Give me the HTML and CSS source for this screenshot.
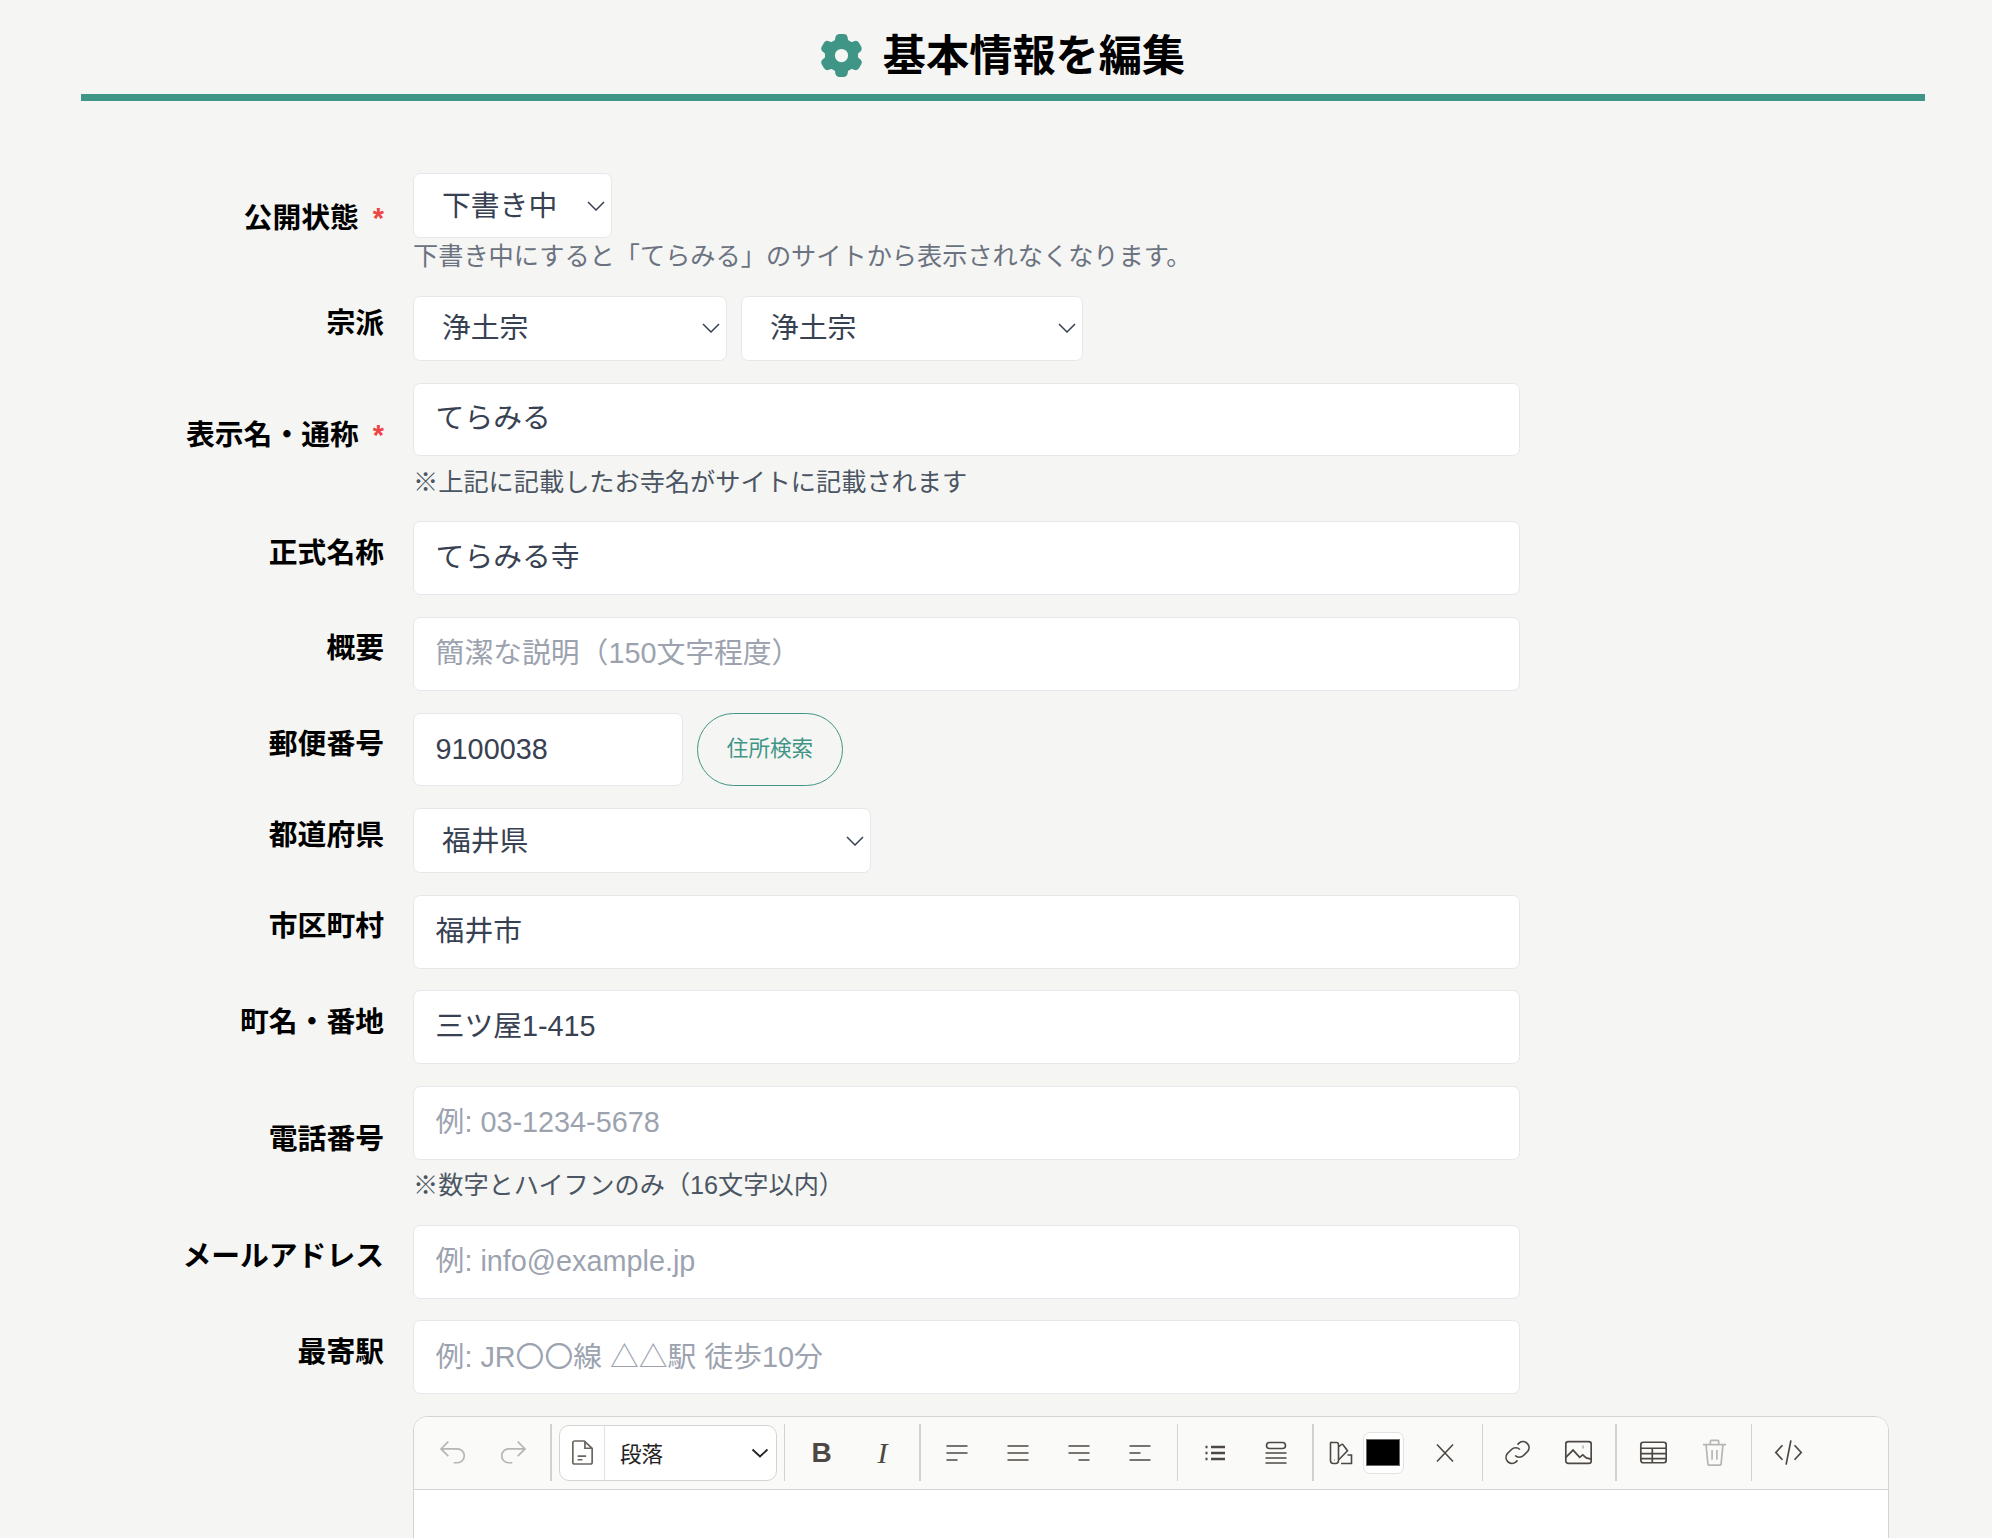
FILE: index.html
```html
<!DOCTYPE html>
<html lang="ja">
<head>
    <meta charset="UTF-8">
    <title>基本情報を編集</title>
    <link rel="stylesheet" href="styles.css">
</head>
<body>
    <div class="main">
        <h1 class="page-title">
            <svg class="title-icon" viewBox="0 0 24 24"><path fill-rule="evenodd" d="M11.078 2.25c-.917 0-1.699.663-1.85 1.567L9.05 4.889c-.02.12-.115.26-.297.348a7.493 7.493 0 0 0-.986.57c-.166.115-.334.126-.45.083L6.3 5.508a1.875 1.875 0 0 0-2.282.819l-.922 1.597a1.875 1.875 0 0 0 .432 2.385l.84.692c.095.078.17.229.154.43a7.598 7.598 0 0 0 0 1.139c.015.2-.059.352-.153.43l-.841.692a1.875 1.875 0 0 0-.432 2.385l.922 1.597a1.875 1.875 0 0 0 2.282.818l1.019-.382c.115-.043.283-.031.45.082.312.214.641.405.985.57.182.088.277.228.297.35l.178 1.071c.151.904.933 1.567 1.85 1.567h1.844c.916 0 1.699-.663 1.85-1.567l.178-1.072c.02-.12.114-.26.297-.349.344-.165.673-.356.985-.57.167-.114.335-.125.45-.082l1.02.382a1.875 1.875 0 0 0 2.28-.819l.923-1.597a1.875 1.875 0 0 0-.432-2.385l-.84-.692c-.095-.078-.17-.229-.154-.43a7.614 7.614 0 0 0 0-1.139c-.016-.2.059-.352.153-.43l.84-.692c.708-.582.891-1.59.433-2.385l-.922-1.597a1.875 1.875 0 0 0-2.282-.818l-1.02.382c-.114.043-.282.031-.449-.083a7.49 7.49 0 0 0-.985-.57c-.183-.087-.277-.227-.297-.348l-.179-1.072a1.875 1.875 0 0 0-1.85-1.567h-1.843ZM12 15a3 3 0 1 0 0-6 3 3 0 0 0 0 6Z"/></svg>
            <span class="title-text">基本情報を編集</span>
        </h1>

        <form class="edit-form">
            <div class="field">
                <label class="field-label">公開状態<span class="required">*</span></label>
                <div class="field-body">
                    <select class="select select-status"><option>下書き中</option></select>
                    <p class="note">下書き中にすると「てらみる」のサイトから表示されなくなります。</p>
                </div>
            </div>

            <div class="field">
                <label class="field-label">宗派</label>
                <div class="field-body inline-group">
                    <select class="select select-sect"><option>浄土宗</option></select>
                    <select class="select select-school"><option>浄土宗</option></select>
                </div>
            </div>

            <div class="field">
                <label class="field-label">表示名・通称<span class="required">*</span></label>
                <div class="field-body">
                    <input class="input input-jp" type="text" value="てらみる">
                    <p class="note note-dark">※上記に記載したお寺名がサイトに記載されます</p>
                </div>
            </div>

            <div class="field">
                <label class="field-label">正式名称</label>
                <div class="field-body"><input class="input input-jp" type="text" value="てらみる寺"></div>
            </div>

            <div class="field">
                <label class="field-label">概要</label>
                <div class="field-body"><input class="input" type="text" placeholder="簡潔な説明（150文字程度）"></div>
            </div>

            <div class="field">
                <label class="field-label">郵便番号</label>
                <div class="field-body inline-group">
                    <input class="input input-zip" type="text" value="9100038">
                    <button class="address-button" type="button">住所検索</button>
                </div>
            </div>

            <div class="field">
                <label class="field-label">都道府県</label>
                <div class="field-body"><select class="select select-pref"><option>福井県</option></select></div>
            </div>

            <div class="field">
                <label class="field-label">市区町村</label>
                <div class="field-body"><input class="input input-jp" type="text" value="福井市"></div>
            </div>

            <div class="field">
                <label class="field-label">町名・番地</label>
                <div class="field-body"><input class="input input-jp" type="text" value="三ツ屋1-415"></div>
            </div>

            <div class="field">
                <label class="field-label">電話番号</label>
                <div class="field-body">
                    <input class="input" type="text" placeholder="例: 03-1234-5678">
                    <p class="note note-dark">※数字とハイフンのみ（16文字以内）</p>
                </div>
            </div>

            <div class="field">
                <label class="field-label">メールアドレス</label>
                <div class="field-body"><input class="input" type="text" placeholder="例: info@example.jp"></div>
            </div>

            <div class="field">
                <label class="field-label">最寄駅</label>
                <div class="field-body"><input class="input" type="text" placeholder="例: JR〇〇線 △△駅 徒歩10分"></div>
            </div>

            <div class="field">
                <div class="field-label"></div>
                <div class="editor">
                    <div class="toolbar">
                        <button class="tool tool-lg disabled" type="button"><svg viewBox="0 0 24 24"><path d="M8.500 3 2.500 9l6 6M2.500 9H16a5.500 5.500 0 0 1 0 11.500h-3"/></svg></button>
                        <button class="tool tool-lg disabled" type="button"><svg viewBox="0 0 24 24"><path d="m15.500 3 6 6-6 6M21.500 9H8a5.500 5.500 0 0 0 0 11.500h3"/></svg></button>
                        <span class="sep"></span>
                        <div class="block-select">
                            <span class="block-icon"><svg viewBox="0 0 24 24"><path d="M5.500 2.500h8L20 8.500V20a1.500 1.500 0 0 1-1.500 1.500h-13A1.500 1.500 0 0 1 4 20V4a1.500 1.500 0 0 1 1.500-1.500ZM14 2.500V8.500H20M8 15h7M8 18h4"/></svg></span>
                            <span class="block-name">段落</span>
                            <svg class="block-chevron" viewBox="0 0 18 10"><path d="m1.500 1.500 7.500 7 7.500-7"/></svg>
                        </div>
                        <span class="sep"></span>
                        <button class="tool tool-text tool-bold" type="button">B</button>
                        <button class="tool tool-text tool-italic" type="button">I</button>
                        <span class="sep"></span>
                        <button class="tool" type="button"><svg viewBox="0 0 24 24"><path d="M1.500 5h21M1.500 12h21M1.500 19h11"/></svg></button>
                        <button class="tool" type="button"><svg viewBox="0 0 24 24"><path d="M1.500 5h21M1.500 12h21M1.500 19h21"/></svg></button>
                        <button class="tool" type="button"><svg viewBox="0 0 24 24"><path d="M1.500 5h21M1.500 12h21M11.500 19h11"/></svg></button>
                        <button class="tool" type="button"><svg viewBox="0 0 24 24"><path d="M1.500 5h21M1.500 12h11M1.500 19h21"/></svg></button>
                        <span class="sep"></span>
                        <button class="tool" type="button"><svg viewBox="0 0 24 24"><path class="thick" d="M8 6h14M8 12h14M8 18h14M2.500 6h2M2.500 12h2M2.500 18h2"/></svg></button>
                        <button class="tool" type="button"><svg viewBox="0 0 24 24"><rect x="2.500" y="1.500" width="19" height="6" rx="3"/><path d="M1.500 12h21M1.500 17h21M1.500 22h21"/></svg></button>
                        <span class="sep"></span>
                        <button class="tool tool-palette" type="button"><svg viewBox="0 0 24 24"><path d="M3 1.500h4.500a2 2 0 0 1 2 2v16a3 3 0 0 1-3 3H4.500a3 3 0 0 1-3-3v-17a1 1 0 0 1 1.500-1ZM9.500 6l3-2.500a1 1 0 0 1 1.500.2l4.500 6L9.500 19M12 22.500h10.500V14h-4"/><path d="M5 19h.5"/></svg></button>
                        <span class="swatch"><span class="swatch-color"></span></span>
                        <button class="tool tool-clear" type="button"><svg viewBox="0 0 24 24"><path d="m4 3.500 16 17M20 3.500l-16 17"/></svg></button>
                        <span class="sep sep-tight"></span>
                        <button class="tool tool-lg" type="button"><svg viewBox="0 0 24 24"><path d="M10 14.500a5 5 0 0 0 7 0l3.500-3.500a5 5 0 0 0-7-7L12 5.500"/><path d="M14 9.500a5 5 0 0 0-7 0L3.500 13a5 5 0 0 0 7 7l1.500-1.500"/></svg></button>
                        <button class="tool tool-lg" type="button"><svg viewBox="0 0 24 24"><rect x="1.500" y="3" width="21" height="18" rx="2"/><path d="m1.500 16 6-6 5.500 6 2.500-2 3 2.500 4 1"/><path class="thick" d="M15.500 7.500h.5"/></svg></button>
                        <span class="sep"></span>
                        <button class="tool tool-lg" type="button"><svg viewBox="0 0 24 24"><rect x="1.500" y="3.500" width="21" height="17" rx="2"/><path d="M1.500 8.500h21M1.500 13h21M1.500 17h21M11 8.500v12"/></svg></button>
                        <button class="tool tool-lg disabled" type="button"><svg viewBox="0 0 24 24"><path d="M2.500 5.500h19M5 5.500 6.500 21a1.500 1.500 0 0 0 1.500 1.500h8a1.500 1.500 0 0 0 1.500-1.500L19 5.500M8.500 5.500V3a1 1 0 0 1 1-1h5a1 1 0 0 1 1 1v2.500M10 10v8M14 10v8"/></svg></button>
                        <span class="sep"></span>
                        <button class="tool tool-lg" type="button"><svg viewBox="0 0 24 24"><path d="M7 6 1.500 12 7 18M17 6l5.500 6-5.500 6M14 2l-4 20"/></svg></button>
                    </div>
                    <div class="editor-body"></div>
                </div>
            </div>
        </form>
    </div>
</body>
</html>
```

FILE: styles.css
```css
:root {
    --bg-color: #f5f5f3;
    --teal: #409686;
    --text-color: #374151;
    --border-color: #e5e7eb;
    --editor-border: #d6d4d0;
    --icon-color: #4d4843;
}
html, body {
    height: 100%;
    overflow: hidden;
}
body {
    margin: 0;
    background-color: var(--bg-color);
    color: #000;
    font-family: "Liberation Sans", "Noto Sans CJK JP", sans-serif;
}
.main {
    margin: 0 67px 0 81px;
}

.page-title {
    display: flex;
    justify-content: center;
    align-items: center;
    gap: 15px;
    height: 101px;
    margin: 0;
    padding: 16px 6px 0 0;
    box-sizing: border-box;
    border-bottom: 7px solid var(--teal);
    font-size: 43.200px;
    font-weight: 700;
    line-height: 1;
}
.title-text {
    padding-top: 4px;
}
.title-icon {
    width: 53px;
    height: 53px;
    fill: var(--teal);
}

.edit-form {
    margin-top: 72.400px;
}
.field {
    display: flex;
    gap: 29px;
    margin-bottom: 21.800px;
}
.field-label {
    flex: none;
    align-self: center;
    width: 303px;
    padding-bottom: 10px;
    box-sizing: border-box;
    text-align: right;
    font-size: 28.800px;
    font-weight: 700;
    line-height: 1.5;
}
.required {
    margin-left: 14px;
    color: #ef4444;
}
.field-body {
    width: 1107px;
}
.inline-group {
    display: flex;
    gap: 14px;
}

.input, .select {
    display: block;
    box-sizing: border-box;
    background-color: #fff;
    border: 1.500px solid var(--border-color);
    border-radius: 7.200px;
    color: var(--text-color);
    font-family: inherit;
    font-size: 28.800px;
}
.input {
    width: 100%;
    height: 73.800px;
    padding: 0 21.600px;
}
.input-jp {
    padding-bottom: 7px;
}
.input::placeholder {
    color: #9ca3af;
    opacity: 1;
}
.input-zip {
    width: 270px;
}
.select {
    height: 64.800px;
    padding: 0 28px;
    appearance: none;
    background-image: url("data:image/svg+xml,%3Csvg xmlns='http://www.w3.org/2000/svg' viewBox='0 0 18 10'%3E%3Cpath d='m1 1 8 8 8-8' fill='none' stroke='%23374151' stroke-width='1.500'/%3E%3C/svg%3E");
    background-repeat: no-repeat;
    background-position: right 6px center;
    background-size: 18px 10px;
}
.select-status { width: 199px; }
.select-sect { width: 314px; }
.select-school { width: 342px; }
.select-pref { width: 458px; }

.note {
    margin: 0;
    font-size: 25.200px;
    line-height: 36px;
    color: #6b7280;
}
.note-dark {
    margin-top: 7.200px;
    color: #4b5563;
}

.address-button {
    width: 146px;
    height: 73.800px;
    padding: 0 0 6px;
    background: transparent;
    border: 1.500px solid var(--teal);
    border-radius: 37px;
    color: var(--teal);
    font-family: inherit;
    font-size: 21.600px;
}

.editor {
    flex: none;
    width: 1476px;
    box-sizing: border-box;
    border: 1.500px solid var(--editor-border);
    border-radius: 14px 14px 0 0;
    background-color: #fff;
    overflow: hidden;
}
.toolbar {
    display: flex;
    align-items: center;
    height: 73px;
    padding-left: 8px;
    box-sizing: border-box;
    background-color: #fafaf8;
    border-bottom: 1.500px solid var(--editor-border);
}
.tool {
    flex: none;
    display: flex;
    justify-content: center;
    align-items: center;
    width: 61px;
    height: 56px;
    padding: 0;
    background: none;
    border: 0;
    color: var(--icon-color);
}
.tool svg, .block-icon svg {
    width: 24px;
    height: 24px;
    fill: none;
    stroke: var(--icon-color);
    stroke-width: 1.600;
}
.tool-lg svg, .block-icon svg {
    width: 29px;
    height: 29px;
    stroke-width: 1.400;
}
.tool .thick {
    stroke-width: 2.400;
}
.tool.disabled svg {
    stroke: #b8b6b2;
}
.tool-text {
    font-size: 28px;
}
.tool-bold {
    font-weight: 700;
}
.tool-italic {
    font-family: "Liberation Serif", serif;
    font-style: italic;
    font-size: 30px;
}
.tool-palette {
    width: 43px;
}
.tool-clear {
    margin-left: 11px;
}
.sep {
    flex: none;
    width: 1.500px;
    height: 57px;
    margin: 0 6px;
    background-color: #d4d2ce;
}
.sep-tight {
    margin-right: 4px;
}
.block-select {
    flex: none;
    display: flex;
    align-items: center;
    width: 218px;
    height: 56px;
    margin: 0 0.500px 0 1.500px;
    box-sizing: border-box;
    background-color: #fff;
    border: 1.500px solid var(--editor-border);
    border-radius: 10px;
}
.block-icon {
    display: flex;
    justify-content: center;
    align-items: center;
    width: 44px;
    height: 100%;
    border-right: 1.500px solid #e4e2de;
}
.block-icon svg {
    stroke: #6b655f;
}
.block-name {
    margin-left: 15px;
    font-size: 21.600px;
    color: #222;
}
.block-chevron {
    width: 18px;
    height: 10px;
    margin-left: auto;
    margin-right: 7px;
    fill: none;
    stroke: #222;
    stroke-width: 1.800;
}
.swatch {
    flex: none;
    display: flex;
    justify-content: center;
    align-items: center;
    width: 41px;
    height: 42px;
    box-sizing: border-box;
    background-color: #fff;
    border: 1.500px solid #e4e2de;
    border-radius: 7px;
}
.swatch-color {
    width: 34px;
    height: 27px;
    background-color: #000;
    border: 1px solid #666;
    box-sizing: border-box;
}
.editor-body {
    height: 60px;
}
```
